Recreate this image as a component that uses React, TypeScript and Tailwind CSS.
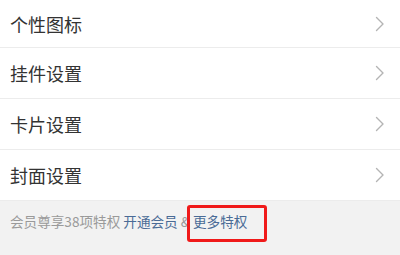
import React from 'react'

const items = ['个性图标', '挂件设置', '卡片设置', '封面设置']

function Chevron() {
  return (
    <svg width="10" height="16" viewBox="0 0 10 16" fill="none" className="shrink-0">
      <path d="M1.5 1.5 L8 8 L1.5 14.5" stroke="#b4b4b4" strokeWidth="1.4" strokeLinecap="round" strokeLinejoin="round" />
    </svg>
  )
}

export default function App() {
  return (
    <div
      className="w-[400px] h-[255px] overflow-hidden bg-white flex flex-col"
      style={{ fontFamily: '"Noto Sans CJK SC", "Noto Sans", sans-serif' }}
    >
      {items.map((label, i) => (
        <div
          key={label}
          className={`flex items-center justify-between pl-[10px] pr-[15px] border-b border-[#ececec] ${
            i === 0 ? 'h-[48px]' : 'h-[51px]'
          }`}
        >
          <span className="text-[18px] leading-none text-[#333333]">{label}</span>
          <Chevron />
        </div>
      ))}
      <div className="relative flex-1 bg-[#f2f2f2] pl-[10px] pt-[11px]">
        <div className="text-[13.6px] leading-[18px] text-[#9a9a9a] whitespace-nowrap">
          会员尊享38项特权 <span className="text-[#4a6b96]">开通会员</span> &amp;{' '}
          <span className="text-[#4a6b96]">更多特权</span>
        </div>
        <div className="absolute left-[187px] top-[4px] w-[80px] h-[37px] border-[3px] border-[#f01a1a] rounded-[3px]" />
      </div>
    </div>
  )
}
